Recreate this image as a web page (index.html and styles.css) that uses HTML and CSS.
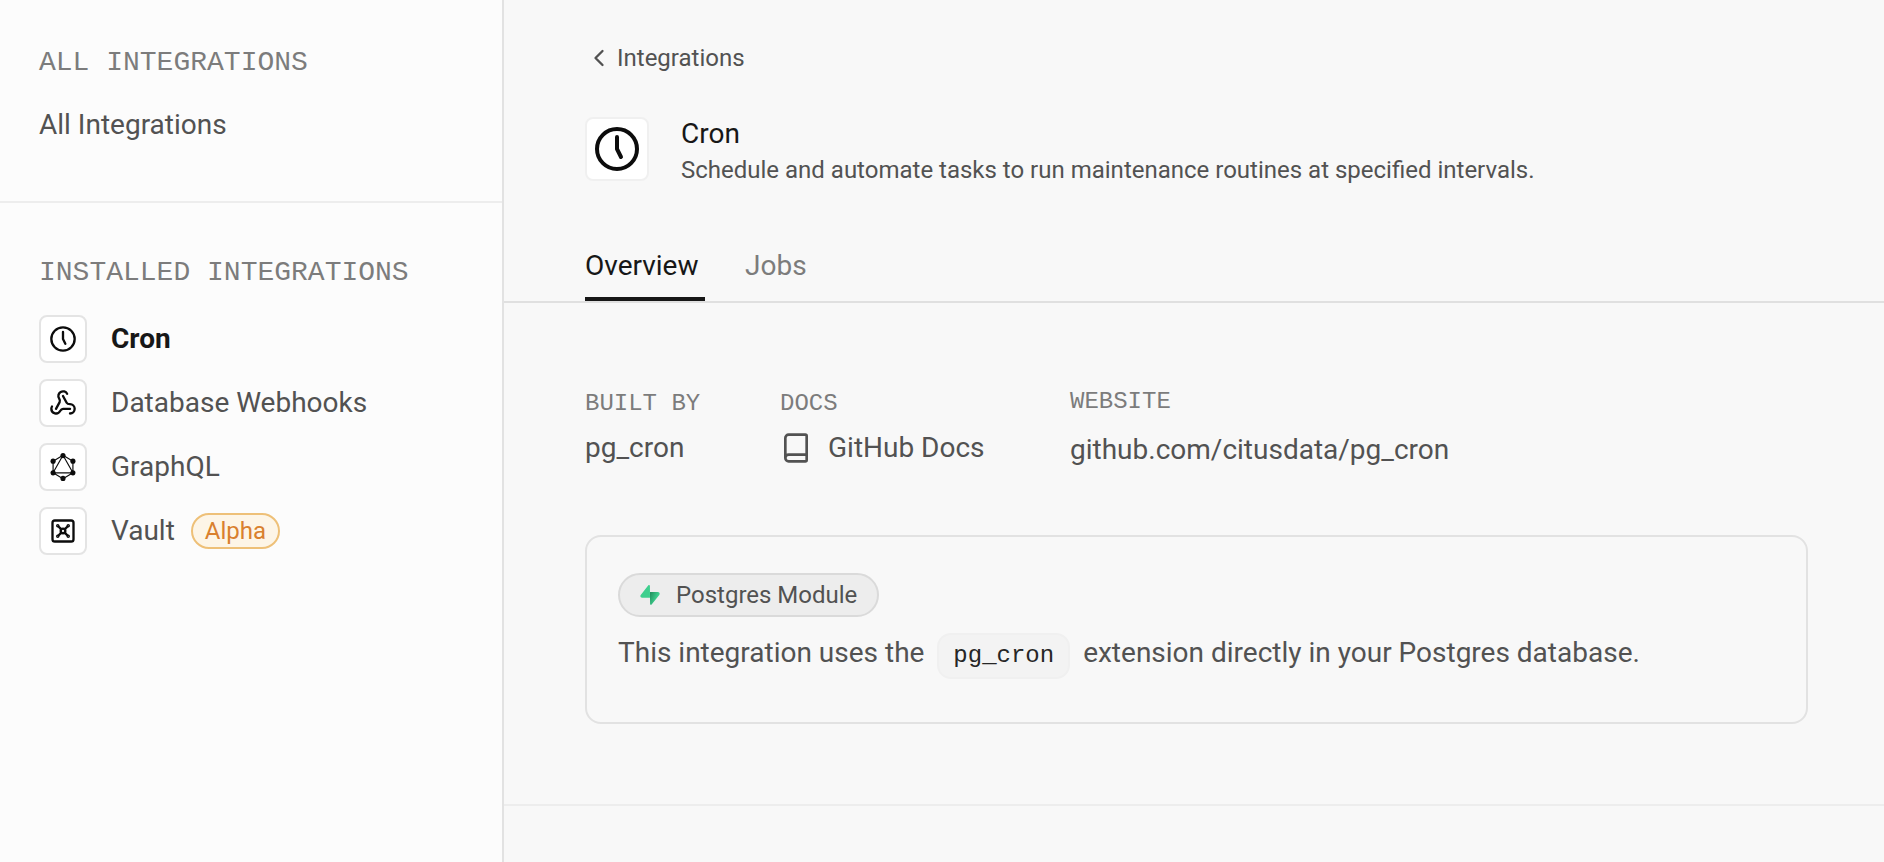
FILE: index.html
```
<!DOCTYPE html>
<html lang="en">
<head>
<meta charset="utf-8">
<title>Cron | Integrations</title>
<link rel="stylesheet" href="styles.css">
</head>
<body>
<div class="layout">
  <aside class="sidebar">
    <nav class="side-section" aria-labelledby="all-heading">
      <h2 class="side-heading" id="all-heading">ALL INTEGRATIONS</h2>
      <a class="side-link" href="#all">All Integrations</a>
    </nav>
    <nav class="side-section side-section-installed" aria-labelledby="installed-heading">
      <h2 class="side-heading" id="installed-heading">INSTALLED INTEGRATIONS</h2>
      <ul class="side-list">
        <li>
          <a class="side-link active" href="#cron" aria-current="page">
            <span class="tile"><svg class="icon" viewBox="0 0 24 24" aria-hidden="true"><circle cx="12" cy="12" r="10"/><path d="M12 6v6l2 4"/></svg></span>
            Cron
          </a>
        </li>
        <li>
          <a class="side-link" href="#webhooks">
            <span class="tile"><svg class="icon" viewBox="0 0 24 24" aria-hidden="true"><path d="M18 16.98h-5.99c-1.1 0-1.95.94-2.48 1.9A4 4 0 0 1 2 17c.01-.7.2-1.4.57-2"/><path d="m6 17 3.13-5.78c.53-.97.1-2.18-.5-3.1a4 4 0 1 1 6.89-4.06"/><path d="m12 6 3.13 5.73C15.66 12.7 16.9 13 18 13a4 4 0 0 1 0 8"/></svg></span>
            Database Webhooks
          </a>
        </li>
        <li>
          <a class="side-link" href="#graphql">
            <span class="tile"><svg class="icon icon-graph" viewBox="0 0 24 24" aria-hidden="true"><path d="M12 2l8.5 5v10L12 22l-8.5-5V7zM12 2l8.5 15h-17z"/><g class="dots"><circle cx="12" cy="2.2" r="2.2"/><circle cx="20.5" cy="7" r="2.2"/><circle cx="20.5" cy="17" r="2.2"/><circle cx="12" cy="21.8" r="2.2"/><circle cx="3.5" cy="17" r="2.2"/><circle cx="3.5" cy="7" r="2.2"/></g></svg></span>
            GraphQL
          </a>
        </li>
        <li>
          <a class="side-link" href="#vault">
            <span class="tile"><svg class="icon" viewBox="0 0 24 24" aria-hidden="true"><rect x="3" y="3" width="18" height="18" rx="2"/><circle cx="7.5" cy="7.5" r=".5"/><path d="m7.9 7.9 2.7 2.7"/><circle cx="16.5" cy="7.5" r=".5"/><path d="m13.4 10.6 2.7-2.7"/><circle cx="7.5" cy="16.5" r=".5"/><path d="m7.9 16.1 2.7-2.7"/><circle cx="16.5" cy="16.5" r=".5"/><path d="m13.4 13.4 2.7 2.7"/><circle cx="12" cy="12" r="2"/></svg></span>
            Vault
            <span class="badge">Alpha</span>
          </a>
        </li>
      </ul>
    </nav>
  </aside>

  <main class="main">
    <header class="page-top">
      <a class="back" href="#integrations">
        <svg class="icon" viewBox="0 0 24 24" aria-hidden="true"><path d="m15 18-6-6 6-6"/></svg>
        Integrations
      </a>
      <div class="title-row">
        <span class="tile tile-large"><svg class="icon" viewBox="0 0 24 24" aria-hidden="true"><circle cx="12" cy="12" r="10"/><path d="M12 6v6l2 4"/></svg></span>
        <div>
          <h1 class="title">Cron</h1>
          <p class="description">Schedule and automate tasks to run maintenance routines at specified intervals.</p>
        </div>
      </div>
    </header>

    <nav class="tabs" aria-label="Cron">
      <a class="tab selected" href="#overview" aria-current="page">Overview</a>
      <a class="tab" href="#jobs">Jobs</a>
    </nav>

    <section class="overview">
      <div class="meta">
        <div class="meta-item">
          <h3 class="meta-label">BUILT BY</h3>
          <span class="meta-value">pg_cron</span>
        </div>
        <div class="meta-item">
          <h3 class="meta-label">DOCS</h3>
          <a class="meta-value" href="#docs"><svg class="icon icon-book" viewBox="0 0 24 24" aria-hidden="true"><path d="M4 19.5v-15A2.5 2.5 0 0 1 6.5 2H19a1 1 0 0 1 1 1v18a1 1 0 0 1-1 1H6.5a1 1 0 0 1 0-5H20"/></svg>GitHub Docs</a>
        </div>
        <div class="meta-item meta-item-wide">
          <h3 class="meta-label">WEBSITE</h3>
          <a class="meta-value" href="#website">github.com/citusdata/pg_cron</a>
        </div>
      </div>

      <div class="card">
        <span class="pill">
          <svg class="bolt" viewBox="0 0 109 113" aria-hidden="true">
            <defs><linearGradient id="bolt-front" x1="54" y1="55" x2="94" y2="72" gradientUnits="userSpaceOnUse"><stop stop-color="#249361"/><stop offset="1" stop-color="#3ecf8e"/></linearGradient></defs>
            <path fill="url(#bolt-front)" d="M63.7 110.3C60.8 113.9 55.1 111.9 55 107.3L54 40H99.2C107.4 40 112 49.5 106.9 55.9L63.7 110.3Z"/>
            <path fill="#3ecf8e" d="M45.3 2.1C48.2-1.5 54 .4 54 5L54.5 72.3H9.8C1.6 72.3-2.9 62.8 2.2 56.4L45.3 2.1Z"/>
          </svg>
          Postgres Module
        </span>
        <p class="card-text">This integration uses the <code class="code">pg_cron</code> extension directly in your Postgres database.</p>
      </div>
    </section>
  </main>
</div>
</body>
</html>
```
FILE: styles.css
```
* {
  box-sizing: border-box;
}

body {
  margin: 0;
  background: #f8f8f8;
  color: #525252;
  font-family: Roboto, "Liberation Sans", sans-serif;
  font-size: 28px;
  line-height: 40px;
}

h1, h2, h3, p, ul {
  margin: 0;
  padding: 0;
  font-weight: 400;
}

a {
  color: inherit;
  text-decoration: none;
}

.layout {
  display: flex;
  min-height: 100vh;
}

.icon {
  flex: none;
  width: 28px;
  height: 28px;
  fill: none;
  stroke: currentColor;
  stroke-width: 2;
  stroke-linecap: round;
  stroke-linejoin: round;
}

.icon-graph {
  overflow: visible;
  stroke-width: 1;
}

.dots {
  fill: currentColor;
  stroke: none;
}

.icon-book {
  width: 32px;
  height: 32px;
}

/* Sidebar */

.sidebar {
  flex: 0 0 504px;
  border-right: 2px solid #e2e2e2;
  background: #fcfcfc;
}

.side-section {
  display: flex;
  flex-direction: column;
  gap: 24px;
  padding: 45px 39px 56px;
  border-bottom: 2px solid #ededed;
}

.side-section-installed {
  padding-top: 52px;
  border-bottom: 0;
}

.side-heading {
  color: #7c7c7c;
  font-family: "Liberation Mono", monospace;
  font-size: 28px;
  line-height: 36px;
}

.side-list {
  display: flex;
  flex-direction: column;
  gap: 16px;
  list-style: none;
}

.side-link {
  display: flex;
  align-items: center;
}

.side-link.active {
  color: #171717;
  font-weight: 700;
}

.tile {
  display: flex;
  flex: none;
  align-items: center;
  justify-content: center;
  width: 48px;
  height: 48px;
  margin-right: 24px;
  border: 2px solid #e4e4e4;
  border-radius: 8px;
  background: #fff;
  color: #0c0c0c;
}

.tile-large {
  width: 64px;
  height: 64px;
  margin-right: 32px;
  border-color: #f0f0f0;
}

.tile-large .icon {
  width: 48px;
  height: 48px;
}

.badge {
  margin-left: 16px;
  padding: 0 12px;
  border: 2px solid #eec078;
  border-radius: 18px;
  background: #fdf5e7;
  color: #d9802e;
  font-size: 24px;
  line-height: 32px;
}

/* Page header */

.main {
  flex: 1;
  min-width: 0;
}

.page-top {
  padding: 42px 76px 58px 81px;
}

.back {
  display: inline-flex;
  align-items: center;
  gap: 4px;
  font-size: 24px;
  line-height: 32px;
}

.title-row {
  display: flex;
  align-items: flex-start;
  margin-top: 34px;
}

.title {
  color: #171717;
  font-size: 28px;
  line-height: 34px;
}

.description {
  font-size: 24px;
  line-height: 38px;
}

.tabs {
  display: flex;
  gap: 40px;
  padding: 0 76px 0 81px;
  border-bottom: 2px solid #e0e0e0;
}

.tab {
  padding-bottom: 12px;
  border-bottom: 4px solid transparent;
  color: #7c7c7c;
  line-height: 38px;
}

.tab.selected {
  min-width: 120px;
  border-color: #171717;
  color: #171717;
}

/* Overview */

.overview {
  padding: 83px 76px 80px 81px;
  border-bottom: 2px solid #ededed;
}

.meta {
  display: grid;
  grid-template-columns: 115px 210px auto;
  align-items: center;
  justify-content: start;
  gap: 80px;
}

.meta-item {
  display: flex;
  flex-direction: column;
  gap: 8px;
}

.meta-item-wide {
  gap: 12px;
}

.meta-label {
  color: #7c7c7c;
  font-family: "Liberation Mono", monospace;
  font-size: 24px;
  line-height: 32px;
  white-space: nowrap;
}

.meta-value {
  display: flex;
  align-items: center;
  gap: 16px;
}

.card {
  display: flex;
  flex-direction: column;
  align-items: flex-start;
  gap: 12px;
  margin-top: 65px;
  padding: 36px 31px 43px;
  border: 2px solid #e2e2e2;
  border-radius: 16px;
}

.pill {
  display: flex;
  align-items: center;
  gap: 16px;
  padding: 0 20px;
  border: 2px solid #dadada;
  border-radius: 22px;
  background: #ededed;
  font-size: 24px;
  line-height: 40px;
}

.bolt {
  width: 20px;
  height: 20px;
}

.card-text {
  line-height: 48px;
}

.code {
  display: inline-block;
  margin: 0 6px;
  padding: 0 14px;
  border: 2px solid #f0f0f0;
  border-radius: 14px;
  background: #f3f3f3;
  color: #262626;
  font-family: "Liberation Mono", monospace;
  font-size: 24px;
  line-height: 42px;
}
```
